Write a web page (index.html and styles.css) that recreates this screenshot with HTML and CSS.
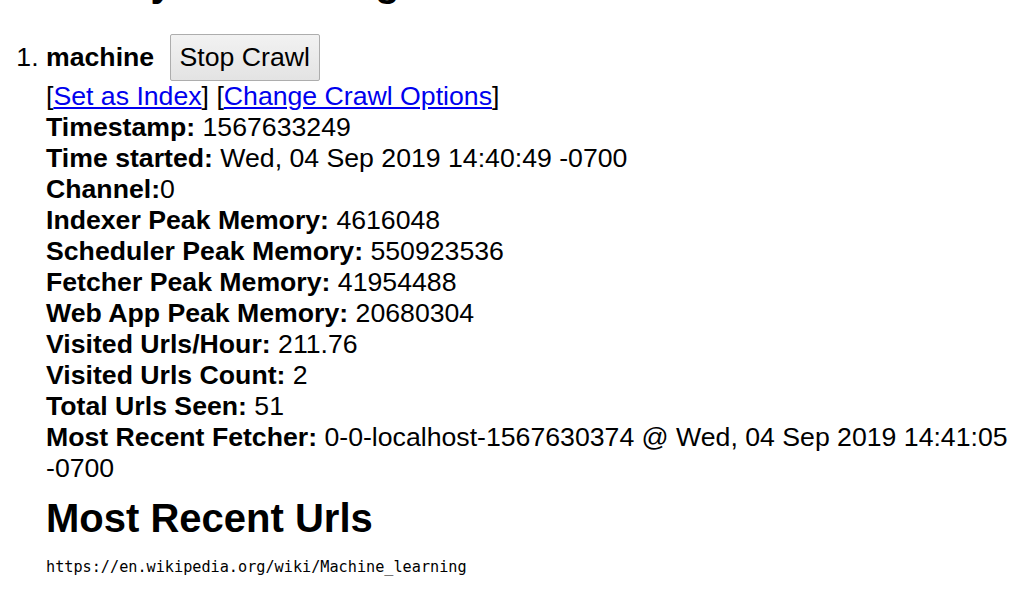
FILE: index.html
```html
<!DOCTYPE html>
<html>
<head>
<meta charset="utf-8">
<link rel="stylesheet" href="styles.css">
</head>
<body>
<h2 class="page-title">Currently Processing</h2>
<ol class="crawls">
  <li class="crawl">
    <div class="crawl-head"><b>machine</b> <button class="btn">Stop Crawl</button></div>
    <div class="row">[<a href="#">Set as Index</a>] [<a href="#">Change Crawl Options</a>]</div>
    <div class="row"><b>Timestamp:</b> 1567633249</div>
    <div class="row"><b>Time started:</b> Wed, 04 Sep 2019 14:40:49 -0700</div>
    <div class="row"><b>Channel:</b>0</div>
    <div class="row"><b>Indexer Peak Memory:</b> 4616048</div>
    <div class="row"><b>Scheduler Peak Memory:</b> 550923536</div>
    <div class="row"><b>Fetcher Peak Memory:</b> 41954488</div>
    <div class="row"><b>Web App Peak Memory:</b> 20680304</div>
    <div class="row"><b>Visited Urls/Hour:</b> 211.76</div>
    <div class="row"><b>Visited Urls Count:</b> 2</div>
    <div class="row"><b>Total Urls Seen:</b> 51</div>
    <div class="row"><b>Most Recent Fetcher:</b> 0-0-localhost-1567630374 @ Wed, 04 Sep 2019 14:41:05 -0700</div>
    <h2 class="section-title">Most Recent Urls</h2>
    <pre class="url-list">https://en.wikipedia.org/wiki/Machine_learning</pre>
  </li>
</ol>
</body>
</html>
```
FILE: styles.css
```css
html, body {
  margin: 0;
  padding: 0;
  background: #ffffff;
  overflow: hidden;
}
body {
  font-family: "Liberation Sans", Arial, sans-serif;
  font-size: 26.67px;
  line-height: 31px;
  color: #000000;
}
.page-title {
  font-size: 40px;
  line-height: 46px;
  font-weight: bold;
  margin: -41px 0 0 -5px;
  white-space: nowrap;
}
.crawls {
  margin: 29px 0 0 0;
  padding: 0 0 0 46px;
}
.crawl-head b {
  font-weight: bold;
}
.btn {
  font-family: "Liberation Sans", Arial, sans-serif;
  font-size: 26.67px;
  line-height: 31px;
  color: #000;
  margin: 0 0 0 8px;
  padding: 7px 9px;
  border: 1px solid #adadad;
  border-radius: 2px;
  background: linear-gradient(#f2f2f2, #e3e3e3);
  cursor: pointer;
}
.row a {
  color: #0000ee;
  text-decoration: underline;
}
.section-title {
  font-size: 40px;
  line-height: 46px;
  font-weight: bold;
  margin: 11px 0 0 0;
}
.url-list {
  font-family: "DejaVu Sans Mono", "Liberation Mono", monospace;
  font-size: 15.2px;
  line-height: 18px;
  margin: 17px 0 0 0;
}
```
